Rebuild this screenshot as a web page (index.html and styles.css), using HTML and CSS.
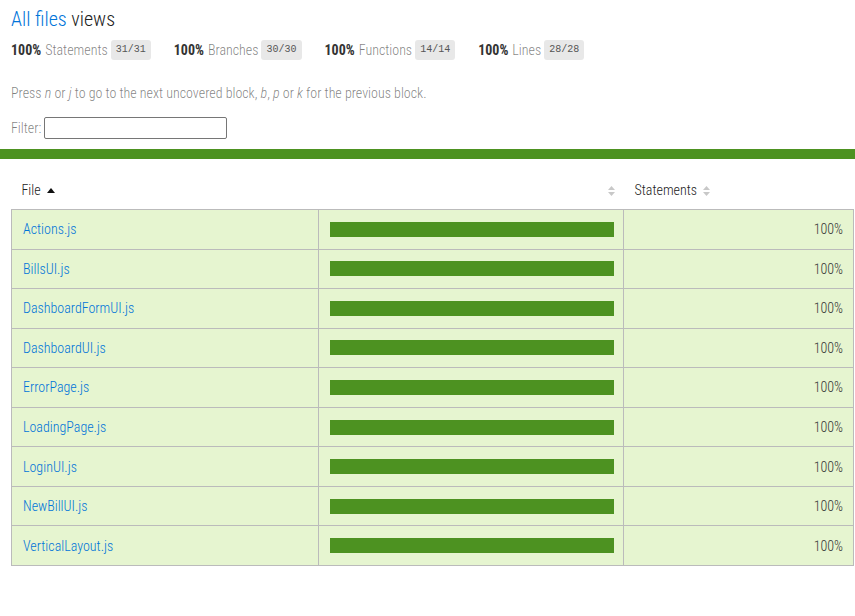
FILE: index.html
```html
<!DOCTYPE html>
<html lang="en">
<head>
<meta charset="utf-8">
<title>Code coverage report for All files</title>
<link rel="stylesheet" href="styles.css">
</head>
<body>
<div class="wrapper">
  <div class="pad1 head">
    <h1 class="title"><a href="#" class="crumb">All files</a> views</h1>
    <div class="summary">
      <div class="metric"><span class="strong">100%</span><span class="quiet">Statements</span><span class="fraction">31/31</span></div>
      <div class="metric"><span class="strong">100%</span><span class="quiet">Branches</span><span class="fraction">30/30</span></div>
      <div class="metric"><span class="strong">100%</span><span class="quiet">Functions</span><span class="fraction">14/14</span></div>
      <div class="metric"><span class="strong">100%</span><span class="quiet">Lines</span><span class="fraction">28/28</span></div>
    </div>
    <p class="quiet hint">Press <em>n</em> or <em>j</em> to go to the next uncovered block, <em>b</em>, <em>p</em> or <em>k</em> for the previous block.</p>
    <div class="filter"><label class="quiet" for="fileSearch">Filter:</label><input id="fileSearch" type="search" class="filter-input"></div>
  </div>
  <div class="status-line"></div>
  <div class="pad1 body">
    <table class="coverage-summary">
      <thead>
        <tr>
          <th class="col-file">File <svg class="sort-asc" width="8" height="5" viewBox="0 0 8 5"><path d="M0 5 L4 0 L8 5 Z" fill="#111"/></svg></th>
          <th class="col-chart"><svg class="sorter" width="7" height="10" viewBox="0 0 7 10"><path d="M0 4 L3.5 0 L7 4 Z M0 6 L3.5 10 L7 6 Z" fill="#c8c8c8"/></svg></th>
          <th class="col-pct">Statements <svg class="sorter" width="7" height="10" viewBox="0 0 7 10"><path d="M0 4 L3.5 0 L7 4 Z M0 6 L3.5 10 L7 6 Z" fill="#c8c8c8"/></svg></th>
        </tr>
      </thead>
      <tbody>
        <tr><td class="file"><a href="#">Actions.js</a></td><td class="pic"><div class="chart"><div class="cover-fill"></div></div></td><td class="pct">100%</td></tr>
        <tr><td class="file"><a href="#">BillsUI.js</a></td><td class="pic"><div class="chart"><div class="cover-fill"></div></div></td><td class="pct">100%</td></tr>
        <tr><td class="file"><a href="#">DashboardFormUI.js</a></td><td class="pic"><div class="chart"><div class="cover-fill"></div></div></td><td class="pct">100%</td></tr>
        <tr><td class="file"><a href="#">DashboardUI.js</a></td><td class="pic"><div class="chart"><div class="cover-fill"></div></div></td><td class="pct">100%</td></tr>
        <tr><td class="file"><a href="#">ErrorPage.js</a></td><td class="pic"><div class="chart"><div class="cover-fill"></div></div></td><td class="pct">100%</td></tr>
        <tr><td class="file"><a href="#">LoadingPage.js</a></td><td class="pic"><div class="chart"><div class="cover-fill"></div></div></td><td class="pct">100%</td></tr>
        <tr><td class="file"><a href="#">LoginUI.js</a></td><td class="pic"><div class="chart"><div class="cover-fill"></div></div></td><td class="pct">100%</td></tr>
        <tr><td class="file"><a href="#">NewBillUI.js</a></td><td class="pic"><div class="chart"><div class="cover-fill"></div></div></td><td class="pct">100%</td></tr>
        <tr><td class="file"><a href="#">VerticalLayout.js</a></td><td class="pic"><div class="chart"><div class="cover-fill"></div></div></td><td class="pct">100%</td></tr>
      </tbody>
    </table>
  </div>
</div>
</body>
</html>
```
FILE: styles.css
```css
html, body {
  margin: 0;
  padding: 0;
}
body {
  font-family: "Roboto Condensed", "Liberation Sans", sans-serif;
  font-size: 14px;
  font-weight: 300;
  color: #333;
  background: #fff;
}
a {
  color: #0074D9;
  text-decoration: none;
}
.pad1 {
  padding: 0 11px;
}
.head {
  padding-top: 7px;
  padding-bottom: 10px;
}
.title {
  margin: 0;
  font-size: 20px;
  font-weight: 300;
  line-height: 24px;
  color: #222;
}
.summary {
  display: flex;
  align-items: center;
  margin-top: 6px;
  height: 26px;
}
.metric {
  display: flex;
  align-items: center;
  margin-right: 23px;
}
.strong {
  font-weight: bold;
  color: #333;
  margin-right: 4px;
}
.quiet {
  color: rgba(0, 0, 0, 0.5);
}
.metric .quiet {
  margin-right: 3px;
}
.fraction {
  font-family: "Liberation Mono", "DejaVu Sans Mono", monospace;
  font-weight: 400;
  font-size: 10px;
  color: #555;
  background: #e8e8e8;
  padding: 4px 5px;
  border-radius: 3px;
  line-height: 12px;
}
.hint {
  margin: 21px 0 0 0;
  line-height: 18px;
}
.hint em {
  font-style: italic;
}
.filter {
  display: flex;
  align-items: center;
  margin-top: 15px;
  gap: 3px;
}
.filter-input {
  box-sizing: border-box;
  width: 183px;
  height: 22px;
  border: 1px solid #767676;
  border-radius: 2px;
  margin: 0;
  padding: 1px 2px;
  background: #fff;
}
.status-line {
  height: 10px;
  background: #4d9221;
}
.body {
  padding-top: 12px;
}
.coverage-summary {
  border-collapse: collapse;
  width: 843px;
  table-layout: fixed;
}
.coverage-summary th {
  text-align: left;
  font-weight: 300;
  white-space: nowrap;
  padding: 0 10px;
  height: 38px;
  vertical-align: middle;
  color: #222;
}
.col-file { width: 287px; }
.col-chart { width: 286px; }
.col-pct { width: auto; }
.coverage-summary th.col-chart {
  text-align: right;
  padding-right: 9px;
}
.coverage-summary th.col-pct {
  padding-left: 11px;
}
.sort-asc {
  margin-left: 3px;
  vertical-align: 2px;
}
.sorter {
  margin-left: 3px;
  vertical-align: -1px;
}
.coverage-summary tbody {
  border: 1px solid #bbb;
}
.coverage-summary tbody tr {
  border-bottom: 1px solid #bbb;
  background: #e6f5d0;
  height: 39.56px;
}
.coverage-summary td {
  border-right: 1px solid #bbb;
  padding: 0 10px 0 11px;
  vertical-align: middle;
  color: #333;
}
.coverage-summary td.pic {
  padding: 0 9px 0 11px;
}
.coverage-summary td.pct {
  text-align: right;
}
.chart {
  line-height: 0;
}
.cover-fill {
  height: 15px;
  background: #4d9221;
}
```
